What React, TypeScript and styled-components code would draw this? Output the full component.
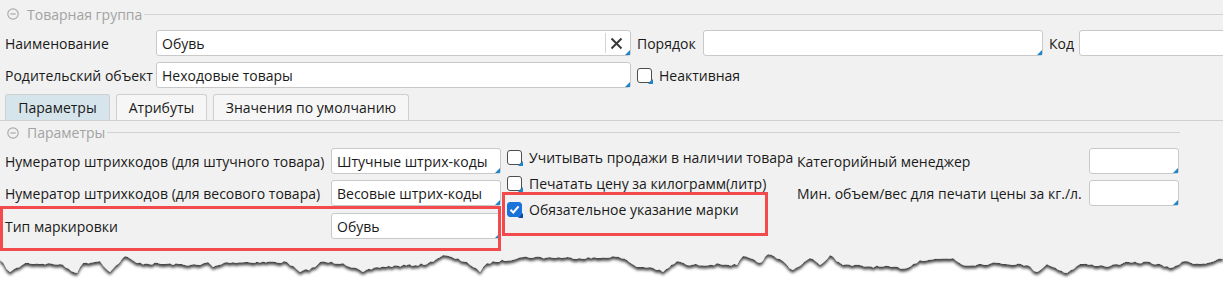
import React from 'react'
import styled, { createGlobalStyle } from 'styled-components'

const GlobalStyle = createGlobalStyle`
  html, body {
    margin: 0;
    padding: 0;
    background: #ffffff;
  }
  body {
    font-family: 'Open Sans', 'Noto Sans', sans-serif;
    font-size: 14px;
    color: #1a1a1a;
  }
  * { box-sizing: border-box; }
`

const Page = styled.div`
  width: 1223px;
  height: 282px;
  overflow: hidden;
  background: #ffffff;
`

const Panel = styled.div`
  background: #f1f1f1;
  height: 250px;
`

const SectionHeader = styled.div<{ $h: number }>`
  display: flex;
  align-items: center;
  height: ${p => p.$h}px;
  padding-left: 7px;
  color: #a3a3a3;
  white-space: nowrap;
`

const SectionTitle = styled.span`
  margin-left: 8px;
  margin-right: 2px;
`

const Rule = styled.div<{ $right?: number }>`
  flex: 1;
  height: 1px;
  background: #d2d2d2;
  margin-right: ${p => p.$right || 0}px;
`

const Row = styled.div<{ $top?: number }>`
  display: flex;
  align-items: center;
  height: 26px;
  margin-top: ${p => p.$top || 0}px;
  position: relative;
`

const Label = styled.div<{ $w: number; $pad?: number }>`
  width: ${p => p.$w}px;
  padding-left: ${p => (p.$pad ?? 5)}px;
  flex-shrink: 0;
  white-space: nowrap;
`

const Field = styled.div<{ $w: number }>`
  position: relative;
  flex-shrink: 0;
  width: ${p => p.$w}px;
  height: 26px;
  padding: 0 5px;
  display: flex;
  align-items: center;
  background: #ffffff;
  border: 1px solid #c9c9c9;
  border-radius: 3px;
  white-space: nowrap;
  color: #1a1a1a;

  &::after {
    content: '';
    position: absolute;
    right: 0;
    bottom: 0;
    border-style: solid;
    border-width: 0 0 5px 5px;
    border-color: transparent transparent #1e86cc transparent;
  }
`

const FieldText = styled.span`
  flex: 1;
`

const ClearButton = styled.div`
  display: flex;
  align-items: center;
  justify-content: center;
  width: 22px;
  height: 20px;
  margin-right: -2px;
  border-left: 1px solid #d4d4d4;
`

const CheckRow = styled.div<{ $marked?: boolean }>`
  position: relative;
  display: flex;
  align-items: center;
  gap: 7px;
  height: 26px;
  white-space: nowrap;

  ${p => p.$marked && `
    &::after {
      content: '';
      position: absolute;
      left: -5px;
      top: -4px;
      width: 260px;
      height: 38px;
      border: 3px solid #f24a4d;
    }
  `}
`

const Box = styled.span<{ $checked?: boolean }>`
  position: relative;
  flex-shrink: 0;
  width: 15px;
  height: 15px;
  border-radius: 3px;
  border: 1.5px solid ${p => (p.$checked ? '#1a73d9' : '#4d4d4d')};
  background: ${p => (p.$checked ? '#1a73d9' : '#ffffff')};
  display: flex;
  align-items: center;
  justify-content: center;

  &::after {
    content: '';
    position: absolute;
    right: -2px;
    bottom: -2px;
    border-style: solid;
    border-width: 0 0 5px 5px;
    border-color: transparent transparent ${p => (p.$checked ? '#0d4f9e' : '#1e86cc')} transparent;
  }
`

const TabStrip = styled.div`
  display: flex;
  gap: 6px;
  padding-left: 5px;
  margin-top: 6px;
  height: 27px;
  border-bottom: 1px solid #d0d0d0;
`

const Tab = styled.div<{ $w: number; $active?: boolean }>`
  width: ${p => p.$w}px;
  height: 26px;
  display: flex;
  align-items: center;
  justify-content: center;
  border: 1px solid #cfcfcf;
  border-bottom: none;
  border-radius: 3px 3px 0 0;
  background: ${p => (p.$active ? '#d6e5eb' : '#f6f6f6')};
  color: #1a1a1a;
  white-space: nowrap;
`

const Params = styled.div`
  display: flex;
`

const Column = styled.div<{ $w?: number; $top?: number }>`
  display: flex;
  flex-direction: column;
  gap: 6px;
  width: ${p => (p.$w ? p.$w + 'px' : 'auto')};
  padding-top: ${p => p.$top || 0}px;
  flex-shrink: 0;
`

const CheckColumn = styled.div`
  display: flex;
  flex-direction: column;
  width: 285px;
  margin-left: 6px;
  flex-shrink: 0;
`

const MarkedRow = styled(Row)`
  &::after {
    content: '';
    position: absolute;
    left: 0;
    right: 0;
    top: -7px;
    bottom: -12px;
    border: 3px solid #f24a4d;
    pointer-events: none;
  }
`

const Collapse = () => (
  <svg width="12" height="12" viewBox="0 0 12 12">
    <circle cx="6" cy="6" r="5.2" fill="none" stroke="#ababab" strokeWidth="1.2" />
    <line x1="3.3" y1="6" x2="8.7" y2="6" stroke="#ababab" strokeWidth="1.2" />
  </svg>
)

const ClearIcon = () => (
  <svg width="13" height="13" viewBox="0 0 13 13">
    <path d="M1.5 1.5 L11.5 11.5 M11.5 1.5 L1.5 11.5" stroke="#3a3a3a" strokeWidth="2" />
  </svg>
)

const Tick = () => (
  <svg width="11" height="11" viewBox="0 0 11 11">
    <path d="M1.5 5.8 L4.3 8.5 L9.6 2.4" fill="none" stroke="#ffffff" strokeWidth="2" />
  </svg>
)

// rough outline of the torn paper edge (x, y) in svg coordinates
const edge: [number, number][] = [
  [0, 10], [10, 22], [25, 13], [60, 14], [77, 23], [83, 13], [100, 11], [110, 22],
  [125, 6], [137, 13], [200, 15], [208, 12], [213, 17], [227, 12], [287, 12], [300, 22],
  [315, 17], [320, 12], [343, 13], [363, 22], [377, 17], [427, 14], [443, 5], [467, 12],
  [480, 22], [487, 13], [523, 7], [600, 8], [613, 6], [627, 10], [637, 17], [650, 17],
  [663, 22], [677, 11], [687, 15], [720, 14], [737, 15], [743, 6], [760, 13], [768, 4],
  [783, 11], [793, 20], [810, 8], [820, 15], [830, 5], [843, 15], [907, 18], [920, 10],
  [953, 8], [963, 15], [1000, 13], [1027, 15], [1037, 22], [1047, 14], [1067, 23], [1080, 14],
  [1110, 16], [1123, 13], [1150, 12], [1170, 18], [1185, 11], [1200, 14], [1223, 9],
]

const buildEdge = () => {
  let seed = 7
  const rnd = () => {
    seed = (seed * 16807) % 2147483647
    return seed / 2147483647
  }
  const pts: string[] = []
  for (let i = 0; i < edge.length - 1; i++) {
    const [x0, y0] = edge[i]
    const [x1, y1] = edge[i + 1]
    const steps = Math.max(1, Math.round((x1 - x0) / 3))
    for (let s = 0; s < steps; s++) {
      const t = s / steps
      const x = x0 + (x1 - x0) * t
      const jitter = s === 0 ? 0 : (rnd() - 0.5) * 2.4
      pts.push(`${x.toFixed(1)},${(y0 + (y1 - y0) * t + jitter).toFixed(1)}`)
    }
  }
  const last = edge[edge.length - 1]
  pts.push(`${last[0]},${last[1]}`)
  return `M0,0 L${pts.join(' L')} L1223,0 Z`
}

const TornSvg = styled.svg`
  display: block;
`

const TornEdge = () => (
  <TornSvg width="1223" height="32" viewBox="0 0 1223 32">
    <defs>
      <filter id="tear" x="-5%" y="-50%" width="110%" height="200%">
        <feDropShadow dx="0" dy="3" stdDeviation="1.8" floodColor="#000000" floodOpacity="0.75" />
      </filter>
    </defs>
    <path d={buildEdge()} fill="#f1f1f1" filter="url(#tear)" />
  </TornSvg>
)

const App = () => {
  return (
    <Page>
      <GlobalStyle />
      <Panel>
        <SectionHeader $h={28}>
          <Collapse />
          <SectionTitle>Товарная группа</SectionTitle>
          <Rule />
        </SectionHeader>

        <Row $top={2}>
          <Label $w={156}>Наименование</Label>
          <Field $w={475}>
            <FieldText>Обувь</FieldText>
            <ClearButton>
              <ClearIcon />
            </ClearButton>
          </Field>
          <Label $w={72} $pad={6}>Порядок</Label>
          <Field $w={340} />
          <Label $w={36} $pad={6}>Код</Label>
          <Field $w={200} />
        </Row>

        <Row $top={6}>
          <Label $w={156}>Родительский объект</Label>
          <Field $w={475}>
            <FieldText>Неходовые товары</FieldText>
          </Field>
          <Label $w={6} $pad={0} />
          <CheckRow>
            <Box />
            <span>Неактивная</span>
          </CheckRow>
        </Row>

        <TabStrip>
          <Tab $w={105} $active>Параметры</Tab>
          <Tab $w={91}>Атрибуты</Tab>
          <Tab $w={196}>Значения по умолчанию</Tab>
        </TabStrip>

        <SectionHeader $h={23}>
          <Collapse />
          <SectionTitle>Параметры</SectionTitle>
          <Rule $right={43} />
        </SectionHeader>

        <Params>
          <Column $w={501} $top={4}>
            <Row>
              <Label $w={331}>Нумератор штрихкодов (для штучного товара)</Label>
              <Field $w={170}>Штучные штрих-коды</Field>
            </Row>
            <Row>
              <Label $w={331}>Нумератор штрихкодов (для весового товара)</Label>
              <Field $w={170}>Весовые штрих-коды</Field>
            </Row>
            <MarkedRow $top={1}>
              <Label $w={331}>Тип маркировки</Label>
              <Field $w={170}>Обувь</Field>
            </MarkedRow>
          </Column>

          <CheckColumn>
            <CheckRow>
              <Box />
              <span>Учитывать продажи в наличии товара</span>
            </CheckRow>
            <CheckRow>
              <Box />
              <span>Печатать цену за килограмм(литр)</span>
            </CheckRow>
            <CheckRow $marked>
              <Box $checked>
                <Tick />
              </Box>
              <span>Обязательное указание марки</span>
            </CheckRow>
          </CheckColumn>

          <Column $top={4}>
            <Row>
              <Label $w={297}>Категорийный менеджер</Label>
              <Field $w={90} />
            </Row>
            <Row>
              <Label $w={297}>Мин. объем/вес для печати цены за кг./л.</Label>
              <Field $w={90} />
            </Row>
          </Column>
        </Params>
      </Panel>
      <TornEdge />
    </Page>
  )
}

export default App
